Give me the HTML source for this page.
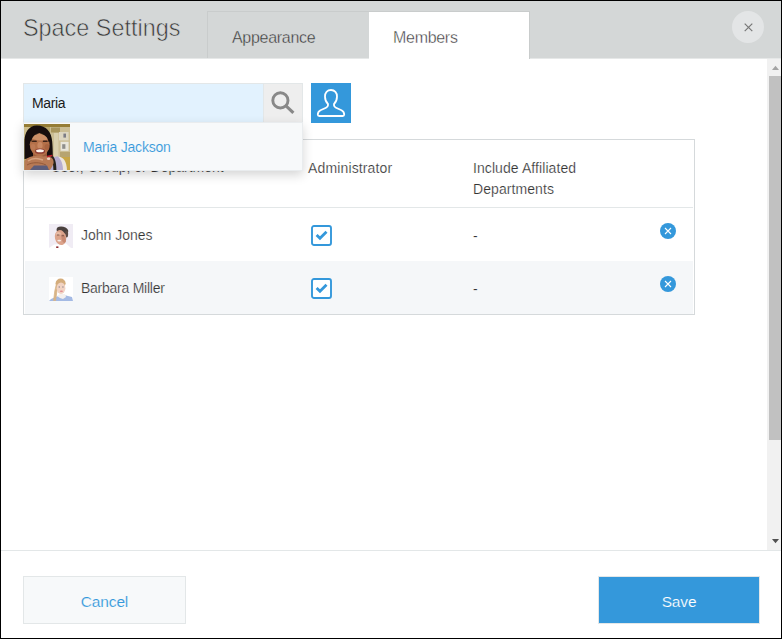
<!DOCTYPE html>
<html><head><meta charset="utf-8">
<style>
*{box-sizing:border-box;margin:0;padding:0}
html,body{width:782px;height:639px;overflow:hidden;background:#fff;font-family:"Liberation Sans",sans-serif;color:#333;font-size:14px}
#frame{position:absolute;left:0;top:0;width:782px;height:639px;border:1px solid #000}
.abs{position:absolute}
#header{left:1px;top:1px;width:780px;height:58px;background:#d4d7d7;border-bottom:1px solid #e6e8e8}
#title{left:23px;top:13px;font-size:23.4px;line-height:30px;color:#3a3a3a;white-space:nowrap;-webkit-text-stroke:0.6px #d4d7d7}
.tab{top:11px;height:48px;width:161px;font-size:16px;letter-spacing:-0.3px;line-height:20px;padding:16px 0 0 24px;color:#505050}
#tab1{-webkit-text-stroke:0.35px #d4d7d7;color:#3a3a3a;left:207px;width:162px;height:47px;background:#d4d7d7;border:1px solid #c9cccc;border-bottom:none;border-right:none}
#tab2{-webkit-text-stroke:0.35px #fff;color:#3a3a3a;left:369px;background:#fff;border-top:1px solid #c9cccc;border-right:1px solid #c9cccc}
#close{left:732px;top:11px;width:32px;height:32px;border-radius:16px;background:#e3e5e6}
#sbar{left:767px;top:59px;width:14px;height:491px;background:#f1f1f1}
#thumb{left:769px;top:76px;width:12px;height:364px;background:#c1c1c1}
#input{left:23px;top:83px;width:240px;height:40px;background:#e2f2fe;border:1px solid #e3e7e8;border-right:none;padding:10px 0 0 8px;font-size:14px;letter-spacing:-0.35px;line-height:18px;color:#1a1a1a}
#sbtn{left:263px;top:83px;width:40px;height:40px;background:#eeeeee;border:1px solid #e3e7e8}
#ubtn{left:311px;top:83px;width:40px;height:40px;background:#3498db}
#table{left:23px;top:139px;width:672px;height:176px;border:1px solid #d5d9db;background:#fff}
.hline{left:25px;width:668px;height:1px;background:#e3e7e8}
.row2{left:25px;top:261px;width:668px;height:53px;background:#f5f7f9}
.t{white-space:nowrap;line-height:20px;font-size:14px;color:#333;-webkit-text-stroke:0.2px #fff}
#drop{left:23px;top:122px;width:280px;height:49px;background:#f7f9fa;box-shadow:0 4px 10px rgba(0,0,0,.17);border:1px solid #e9ecee}
#footline{left:1px;top:550px;width:780px;height:1px;background:#e3e7e8}
#cancel{left:23px;top:576px;width:163px;height:48px;background:#f7f9fa;border:1px solid #e3e7e8;color:#3498db;font-size:15.5px;letter-spacing:-0.15px;text-align:center;line-height:49px;-webkit-text-stroke:0.15px #f7f9fa}
#save{left:598px;top:576px;width:162px;height:48px;background:#3498db;border:1px solid #e3e7e8;color:#fff;font-size:15.5px;letter-spacing:-0.15px;text-align:center;line-height:49px;-webkit-text-stroke:0.18px #3498db}
</style></head><body>
<div id="frame"></div>
<div id="header" class="abs"></div>
<div id="title" class="abs">Space Settings</div>
<div id="tab1" class="abs tab">Appearance</div>
<div id="tab2" class="abs tab">Members</div>
<div id="close" class="abs"><svg width="32" height="32" viewBox="0 0 32 32"><path d="M12.7 12.6 L20.3 20.2 M20.3 12.6 L12.7 20.2" stroke="#777" stroke-width="1.2" fill="none"/></svg></div>

<div id="sbar" class="abs"></div>
<div id="thumb" class="abs"></div>
<svg class="abs" style="left:767px;top:59px" width="14" height="491" viewBox="0 0 14 491"><path d="M5 11 L12 11 L8.5 6.7 Z" fill="#a3a3a3"/><path d="M5 480 L12 480 L8.5 484.3 Z" fill="#505050"/></svg>

<div id="table" class="abs"></div>
<div class="abs hline" style="top:207px"></div>
<div class="abs row2"></div>
<div class="abs t" style="left:51px;top:157px">User, Group, or Department</div>
<div class="abs t" style="left:308px;top:158px;letter-spacing:0.14px">Administrator</div>
<div class="abs t" style="left:473px;top:158px;letter-spacing:0.08px">Include Affiliated</div>
<div class="abs t" style="left:473px;top:179px;letter-spacing:0.08px">Departments</div>

<!-- row 1 -->
<svg class="abs" style="left:49px;top:224px" width="24" height="24" viewBox="0 0 24 24">
<defs><filter id="b1" x="-20%" y="-20%" width="140%" height="140%"><feGaussianBlur stdDeviation="0.6"/></filter><clipPath id="c1"><rect width="24" height="24"/></clipPath></defs>
<rect width="24" height="24" fill="#f0ecf4"/>
<g clip-path="url(#c1)"><g filter="url(#b1)">
<path d="M0 24 L5 20.5 L17 19.5 L22 24 Z" fill="#ffffff"/>
<ellipse cx="13.4" cy="6.4" rx="6" ry="3.8" fill="#4a403c" transform="rotate(14 13.4 6.4)"/>
<ellipse cx="17.6" cy="10" rx="1.5" ry="3.6" fill="#5c4c44"/>
<ellipse cx="11.5" cy="13.6" rx="5.6" ry="7.6" fill="#dca48c" transform="rotate(-14 11.5 13.4)"/>
<ellipse cx="14.6" cy="14.6" rx="2" ry="4.4" fill="#c88a72" transform="rotate(-14 14.6 14.6)"/>
<ellipse cx="9.4" cy="9.6" rx="2.6" ry="1.6" fill="#e8bca6"/>
<rect x="8" y="10.6" width="2.4" height="0.8" fill="#6a4a40"/><rect x="12.6" y="11.4" width="2.4" height="0.8" fill="#6a4a40"/>
<ellipse cx="10.2" cy="16.6" rx="1.9" ry="0.9" fill="#f6ece8"/>
<rect x="7.2" y="22.4" width="2.2" height="2" fill="#8c2a30"/>
</g></g></svg>
<div class="abs t" style="left:81px;top:225px">John Jones</div>
<svg class="abs" style="left:311px;top:225px" width="21" height="21" viewBox="0 0 21 21"><rect x="1" y="1" width="19" height="19" rx="2" fill="#fff" stroke="#3498db" stroke-width="1.9"/><path d="M5.6 9.9 L9 13.3 L15.5 6.7" stroke="#3498db" stroke-width="2.8" fill="none"/></svg>
<div class="abs t" style="left:473px;top:226px">-</div>
<svg class="abs" style="left:660px;top:223px" width="16" height="16" viewBox="0 0 16 16"><circle cx="8" cy="8" r="8" fill="#3498db"/><path d="M5 5 L11 11 M11 5 L5 11" stroke="#fff" stroke-width="1.1"/></svg>

<!-- row 2 -->
<svg class="abs" style="left:49px;top:277px" width="24" height="24" viewBox="0 0 24 24">
<defs><filter id="b2" x="-20%" y="-20%" width="140%" height="140%"><feGaussianBlur stdDeviation="0.7"/></filter><clipPath id="c2"><rect width="24" height="24"/></clipPath></defs>
<rect width="24" height="24" fill="#ffffff"/>
<g clip-path="url(#c2)"><g filter="url(#b2)">
<path d="M0 24 L2 22 L9 19 L17 18.5 L23 20 L24 24 Z" fill="#a4bae4"/>
<path d="M8 19 L11 17 L16 17 L17 20 L14 22 L11 21 Z" fill="#f4f0ee"/>
<ellipse cx="11.6" cy="6.2" rx="5" ry="4.6" fill="#d4ad7c"/>
<path d="M7.4 7 L5.8 14 L4.6 23.5 L6.6 23.5 L7.8 15 L8.6 9 Z" fill="#d8b486" stroke="#d8b486" stroke-width="0.8"/>
<ellipse cx="12" cy="11.2" rx="4.4" ry="5.8" fill="#f1d3c3"/>
<ellipse cx="12.4" cy="14.3" rx="1.6" ry="0.8" fill="#e08a90"/>
<rect x="9.6" y="9.6" width="1.4" height="0.8" fill="#6a6a7a"/><rect x="13.2" y="9.6" width="1.4" height="0.8" fill="#6a6a7a"/>
</g></g></svg>
<div class="abs t" style="left:81px;top:278px;letter-spacing:-0.25px;-webkit-text-stroke-color:#f5f7f9">Barbara Miller</div>
<svg class="abs" style="left:311px;top:278px" width="21" height="21" viewBox="0 0 21 21"><rect x="1" y="1" width="19" height="19" rx="2" fill="#fff" stroke="#3498db" stroke-width="1.9"/><path d="M5.6 9.9 L9 13.3 L15.5 6.7" stroke="#3498db" stroke-width="2.8" fill="none"/></svg>
<div class="abs t" style="left:473px;top:279px;-webkit-text-stroke-color:#f5f7f9">-</div>
<svg class="abs" style="left:660px;top:276px" width="16" height="16" viewBox="0 0 16 16"><circle cx="8" cy="8" r="8" fill="#3498db"/><path d="M5 5 L11 11 M11 5 L5 11" stroke="#fff" stroke-width="1.1"/></svg>

<!-- search -->
<div id="input" class="abs">Maria</div>
<div id="sbtn" class="abs"><svg class="abs" style="left:-1px;top:-1px" width="40" height="40" viewBox="0 0 40 40"><circle cx="17.4" cy="17.4" r="7.6" fill="none" stroke="#888" stroke-width="2.9"/><path d="M23 22.8 L30.4 29.8" stroke="#888" stroke-width="3.1"/></svg></div>
<div id="ubtn" class="abs"><svg width="40" height="40" viewBox="0 0 40 40"><path d="M20 7 C16.2 7 14 10 14 13.5 C14 17 15.3 19.5 17 21 C17.3 23 16.5 24 15 24.7 L9.5 27.2 C7.5 28.2 6.8 29.5 6.8 31.5 C6.8 32.5 7.3 33 8.3 33 L31.7 33 C32.7 33 33.2 32.5 33.2 31.5 C33.2 29.5 32.5 28.2 30.5 27.2 L25 24.7 C23.5 24 22.7 23 23 21 C24.7 19.5 26 17 26 13.5 C26 10 23.8 7 20 7 Z" fill="none" stroke="#fff" stroke-width="1.8" stroke-linejoin="round"/></svg></div>
<div id="drop" class="abs"></div>
<svg class="abs" style="left:24px;top:124px" width="46" height="46" viewBox="0 0 46 46">
<defs><filter id="b3" x="-20%" y="-20%" width="140%" height="140%"><feGaussianBlur stdDeviation="0.55"/></filter><clipPath id="c3"><rect width="46" height="46"/></clipPath></defs>
<rect width="46" height="46" fill="#b9a76c"/>
<g clip-path="url(#c3)"><g filter="url(#b3)">
<rect x="0" y="0" width="46" height="3" fill="#957c36"/>
<rect x="0" y="3" width="6" height="12" fill="#cdbd8c"/>
<rect x="26" y="3" width="20" height="31" fill="#cbbd94"/>
<rect x="27" y="3.5" width="9" height="5" fill="#a8955c"/>
<rect x="30" y="9" width="4.4" height="24" fill="#d9cfae"/>
<rect x="35" y="8" width="9.6" height="8.4" fill="#ddd6c2"/>
<rect x="39.4" y="9.6" width="2.6" height="4" fill="#7c7c86"/>
<rect x="36.6" y="17.8" width="8" height="9" fill="#e9e6dc"/>
<rect x="38.2" y="20.2" width="3.2" height="4.6" fill="#8e8e8c"/>
<rect x="36" y="28" width="10" height="6" fill="#b7a470"/>
<rect x="34" y="33" width="12" height="13" fill="#c8a646"/>
<path d="M31 33.4 C38 30.6 42.6 36 43 46 L31 46 Z" fill="#ece5dd"/>
<path d="M26 34 L33.6 32.2 C37.6 35.6 39 41 39 46 L22 46 Z" fill="#b6add0"/>
<path d="M12.7 1.4 C5 1.6 0.5 8 0.5 17.4 L0.5 35 L28.8 32 C28.8 26 28.6 22 28.2 17.4 C27.6 8 22 1.2 12.7 1.4 Z" fill="#14100e"/>
<path d="M27.6 30.6 C30.8 33.4 32.4 38 32.4 46 L29.4 46 C29.4 40 28.4 36 26 33.6 Z" fill="#26201e"/>
<rect x="9" y="27" width="14" height="8" fill="#9a5c3c"/><ellipse cx="15.7" cy="20.6" rx="10" ry="11.4" fill="#b47049"/>
<path d="M7 14 C9 9.6 14 8.6 17 9.6 C21 9.2 24 12 25 15 C21 17 11 17 7 14 Z" fill="#cc9068"/>
<path d="M5.6 16 C6 10 10 7.6 15.4 9.8 C10.6 10 8 13 7.2 18 Z" fill="#14100e"/>
<path d="M15.4 9.8 C20 7.6 25.4 10 26 17 L24.6 18 C23.8 13 20.6 10.4 15.4 9.8 Z" fill="#14100e"/>
<ellipse cx="16" cy="21.4" rx="2.6" ry="3.4" fill="#c98862"/>
<ellipse cx="9" cy="23" rx="2.4" ry="3" fill="#bd7a54"/>
<ellipse cx="23" cy="23" rx="2.4" ry="3" fill="#a8643f"/>
<rect x="8" y="16.6" width="4.8" height="1.5" rx="0.7" fill="#3a2218"/>
<rect x="18.8" y="16.6" width="4.8" height="1.5" rx="0.7" fill="#3a2218"/>
<ellipse cx="16" cy="27.2" rx="5" ry="2.6" fill="#8c3a30"/>
<ellipse cx="16" cy="26.7" rx="3.9" ry="1.5" fill="#fdf6ee"/>
<path d="M0.5 37 C4 32 12 31 20 32.4 C26 32 30 34 29.6 39 C29 42 27 44 26 46 L0.5 46 Z" fill="#b87a54"/>
<path d="M4 37 C8 34 14 34 19 36" stroke="#d7a482" stroke-width="1.4" fill="none"/>
<path d="M3 41 C8 38 16 38 22 41" stroke="#8f5638" stroke-width="0.9" fill="none"/>
<path d="M6 46 L10 41.6 L23 41.6 L25 46 Z" fill="#5c5c7a"/>
<ellipse cx="24.6" cy="34.8" rx="1.7" ry="1.2" fill="#efd2c2"/>
<path d="M23 32.4 L28.4 31.4" stroke="#c21f2c" stroke-width="1.5"/>
</g></g></svg>
<div class="abs t" style="left:83px;top:137px;color:#3498db;letter-spacing:-0.2px;-webkit-text-stroke:0.12px #f7f9fa">Maria Jackson</div>

<div id="footline" class="abs"></div>
<div id="cancel" class="abs">Cancel</div>
<div id="save" class="abs">Save</div>
</body></html>
